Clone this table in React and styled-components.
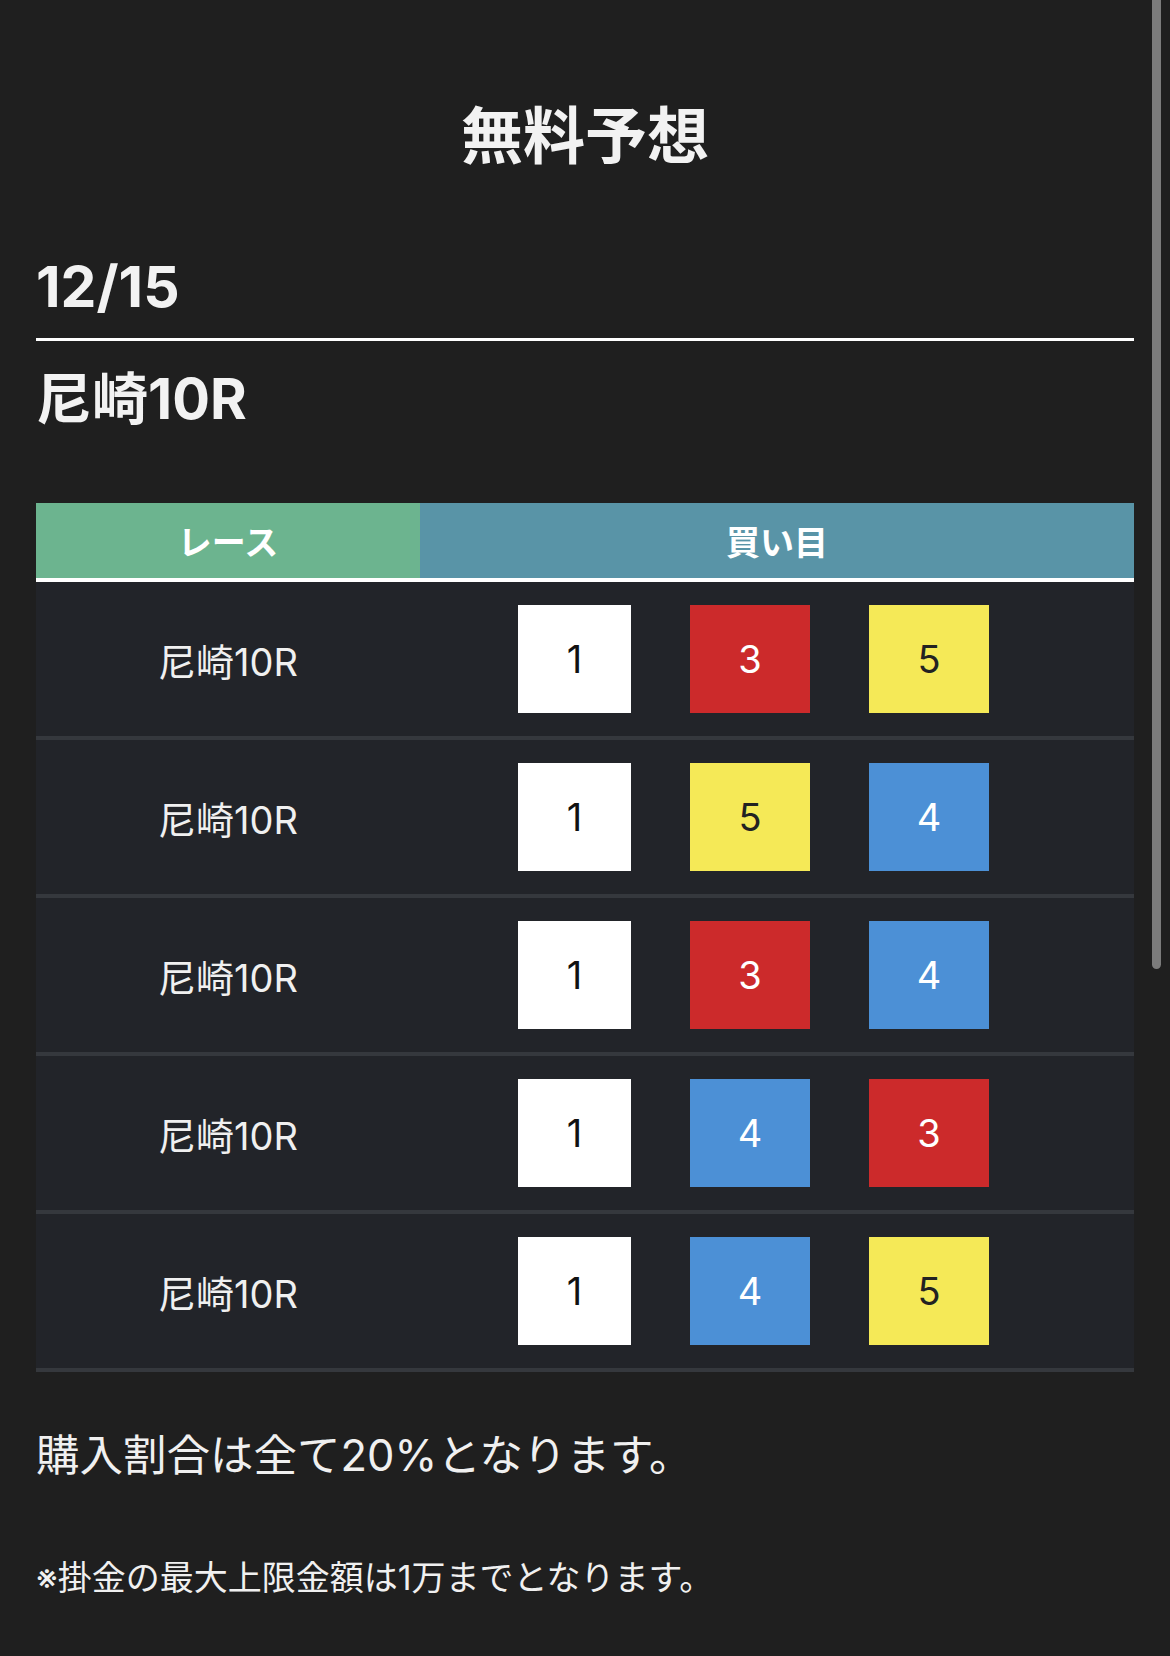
import React from 'react';
import styled, { createGlobalStyle } from 'styled-components';

const PICKS = [
  { race: '尼崎10R', boats: [1, 3, 5] },
  { race: '尼崎10R', boats: [1, 5, 4] },
  { race: '尼崎10R', boats: [1, 3, 4] },
  { race: '尼崎10R', boats: [1, 4, 3] },
  { race: '尼崎10R', boats: [1, 4, 5] },
];

const BOAT_COLORS = {
  1: { bg: '#ffffff', fg: '#111111' },
  3: { bg: '#cc2a2b', fg: '#ffffff' },
  4: { bg: '#4c90d6', fg: '#ffffff' },
  5: { bg: '#f5e957', fg: '#222222' },
};

const BOX_WIDTHS = [113, 120, 120];

const App = () => (
  <>
    <GlobalStyle />
    <Page>
      <Title>無料予想</Title>
      <DateHeading>12/15</DateHeading>
      <RaceHeading>尼崎10R</RaceHeading>

      <Table>
        <HeadRow>
          <HeadCell $bg="#6cb48f">レース</HeadCell>
          <HeadCell $bg="#5994a7">買い目</HeadCell>
        </HeadRow>
        {PICKS.map((pick, i) => (
          <Row key={i}>
            <RaceCell>{pick.race}</RaceCell>
            <BoxCell>
              {pick.boats.map((n, j) => (
                <Boat key={j} $w={BOX_WIDTHS[j]} $bg={BOAT_COLORS[n].bg} $fg={BOAT_COLORS[n].fg}>
                  {n}
                </Boat>
              ))}
            </BoxCell>
          </Row>
        ))}
      </Table>

      <Note>購入割合は全て20%となります。</Note>
      <SmallNote>※掛金の最大上限金額は1万までとなります。</SmallNote>
    </Page>
    <ScrollThumb aria-hidden="true" />
  </>
);

const GlobalStyle = createGlobalStyle`
  html, body {
    margin: 0;
    padding: 0;
    background: #1f1f1f;
  }
  body {
    font-family: Inter, 'Noto Sans CJK JP', sans-serif;
    color: #f2f2f2;
  }
`;

const Page = styled.div`
  min-height: 1656px;
  box-sizing: border-box;
  padding: 101px 36px 40px;
  background: #1f1f1f;
`;

const Title = styled.h1`
  margin: 0;
  text-align: center;
  font-size: 62px;
  line-height: 72px;
  font-weight: 700;
  color: #f2f2f2;
`;

const DateHeading = styled.h2`
  margin: 81px 0 0;
  padding-bottom: 19px;
  border-bottom: 3px solid #ffffff;
  font-size: 57px;
  line-height: 65px;
  font-weight: 700;
  color: #f2f2f2;
`;

const RaceHeading = styled.h3`
  margin: 26px 0 0;
  font-size: 56px;
  line-height: 65px;
  font-weight: 700;
  color: #f2f2f2;
`;

const Table = styled.div`
  margin-top: 71px;
  display: flex;
  flex-direction: column;
`;

const HeadRow = styled.div`
  display: grid;
  grid-template-columns: 384px 1fr;
  height: 75px;
  border-bottom: 4px solid #ffffff;
`;

const HeadCell = styled.div`
  display: flex;
  align-items: center;
  justify-content: center;
  background: ${({ $bg }) => $bg};
  color: #ffffff;
  font-size: 34px;
  font-weight: 700;
`;

const Row = styled.div`
  display: grid;
  grid-template-columns: 384px 1fr;
  height: 154px;
  background: #222429;
  border-bottom: 4px solid #35383d;
`;

const RaceCell = styled.div`
  display: flex;
  align-items: center;
  justify-content: center;
  font-size: 38px;
  color: #f0f0f0;
`;

const BoxCell = styled.div`
  display: flex;
  align-items: center;
  gap: 59px;
  padding-left: 98px;
`;

const Boat = styled.div`
  width: ${({ $w }) => $w}px;
  height: 108px;
  display: flex;
  align-items: center;
  justify-content: center;
  background: ${({ $bg }) => $bg};
  color: ${({ $fg }) => $fg};
  font-size: 38px;
`;

const Note = styled.p`
  margin: 58px 0 0;
  font-size: 43.5px;
  line-height: 50px;
  color: #f0f0f0;
`;

const SmallNote = styled.p`
  margin: 79px 0 0;
  font-size: 34px;
  line-height: 38px;
  color: #f0f0f0;
`;

const ScrollThumb = styled.div`
  position: fixed;
  top: 0;
  left: 1152px;
  width: 9px;
  height: 969px;
  border-radius: 0 0 5px 5px;
  background: #7b7b7b;
`;

export default App;
